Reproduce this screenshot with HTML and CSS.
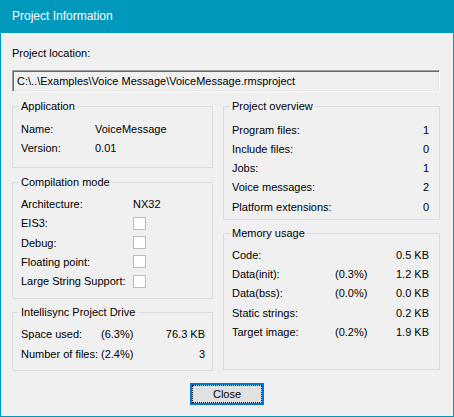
FILE: index.html
```html
<!DOCTYPE html>
<html lang="en">
<head>
    <meta charset="UTF-8">
    <title>Project Information</title>
    <link rel="stylesheet" href="styles.css">
</head>
<body>
    <div class="window">
        <div class="titlebar">Project Information</div>

        <div class="content">
            <div class="location-label">Project location:</div>
            <div class="location-box">C:\..\Examples\Voice Message\VoiceMessage.rmsproject</div>

            <div class="columns">
                <div class="column">
                    <fieldset class="group group-app">
                        <legend>Application</legend>
                        <div class="row cols-app"><span>Name:</span><span>VoiceMessage</span></div>
                        <div class="row cols-app"><span>Version:</span><span>0.01</span></div>
                    </fieldset>

                    <fieldset class="group group-comp">
                        <legend>Compilation mode</legend>
                        <div class="row cols-comp"><span>Architecture:</span><span>NX32</span></div>
                        <div class="row cols-comp"><span>EIS3:</span><span class="check"></span></div>
                        <div class="row cols-comp"><span>Debug:</span><span class="check"></span></div>
                        <div class="row cols-comp"><span>Floating point:</span><span class="check"></span></div>
                        <div class="row cols-comp"><span>Large String Support:</span><span class="check"></span></div>
                    </fieldset>

                    <fieldset class="group group-drive">
                        <legend>Intellisync Project Drive</legend>
                        <div class="row cols-drive"><span>Space used:</span><span>(6.3%)</span><span class="num">76.3 KB</span></div>
                        <div class="row cols-drive"><span>Number of files:</span><span>(2.4%)</span><span class="num">3</span></div>
                    </fieldset>
                </div>

                <div class="column">
                    <fieldset class="group group-overview">
                        <legend>Project overview</legend>
                        <div class="row cols-overview"><span>Program files:</span><span class="num">1</span></div>
                        <div class="row cols-overview"><span>Include files:</span><span class="num">0</span></div>
                        <div class="row cols-overview"><span>Jobs:</span><span class="num">1</span></div>
                        <div class="row cols-overview"><span>Voice messages:</span><span class="num">2</span></div>
                        <div class="row cols-overview"><span>Platform extensions:</span><span class="num">0</span></div>
                    </fieldset>

                    <fieldset class="group group-memory">
                        <legend>Memory usage</legend>
                        <div class="row cols-memory"><span>Code:</span><span></span><span class="num">0.5 KB</span></div>
                        <div class="row cols-memory"><span>Data(init):</span><span>(0.3%)</span><span class="num">1.2 KB</span></div>
                        <div class="row cols-memory"><span>Data(bss):</span><span>(0.0%)</span><span class="num">0.0 KB</span></div>
                        <div class="row cols-memory"><span>Static strings:</span><span></span><span class="num">0.2 KB</span></div>
                        <div class="row cols-memory"><span>Target image:</span><span>(0.2%)</span><span class="num">1.9 KB</span></div>
                    </fieldset>
                </div>
            </div>

            <div class="buttons">
                <button class="btn">Close</button>
            </div>
        </div>
    </div>
</body>
</html>
```

FILE: styles.css
```css
body {
    margin: 0;
    font-family: "Liberation Sans", Arial, sans-serif;
    font-size: 11px;
    color: #000;
    background: #f0f0f0;
}

.window {
    width: 454px;
    height: 417px;
    box-sizing: border-box;
    border: 1px solid #0099bc;
    border-top: none;
    background: #f0f0f0;
}

.titlebar {
    height: 33px;
    line-height: 32px;
    margin: 0 -1px;
    padding-left: 12px;
    background: #0099bc;
    color: #fff;
    font-size: 12px;
}

.content {
    padding: 14px 13px 0 11px;
}

.location-label {
    line-height: 13px;
}

.location-box {
    margin-top: 10px;
    height: 22px;
    box-sizing: border-box;
    border: 1px solid;
    border-color: #a0a0a0 #fff #fff #a0a0a0;
    box-shadow: inset 1px 1px 0 #696969, inset -1px -1px 0 #e3e3e3;
    padding: 0 4px;
    line-height: 20px;
    white-space: nowrap;
    overflow: hidden;
}

.columns {
    display: grid;
    grid-template-columns: 201px 217px;
    column-gap: 10px;
    margin-top: 8px;
}

.column {
    display: flex;
    flex-direction: column;
}

/* group boxes */
.group {
    margin: 0;
    border: 1px solid #dcdcdc;
    padding: 6px 7px 8px 8px;
    min-width: 0;
}

.group legend {
    margin-left: -2px;
    padding: 0 2px;
    line-height: 13px;
}

.group + .group {
    margin-top: 8px;
}

.group-app {
    padding-bottom: 9px;
}

.group-comp {
    padding-bottom: 7px;
}

.group-drive {
    margin-top: 7px !important;
    padding-bottom: 7px;
}

.group-overview {
    padding: 7px 10px 3px 8px;
}

.group-memory {
    margin-top: 7px !important;
    padding: 5px 10px 27px 8px;
}

.row {
    display: grid;
    height: 19.25px;
    align-items: center;
    white-space: nowrap;
}

.cols-app { grid-template-columns: 74px 1fr; }
.cols-comp { grid-template-columns: 112px 1fr; }
.cols-drive { grid-template-columns: 80px 1fr auto; }
.cols-overview { grid-template-columns: 1fr auto; }
.cols-memory { grid-template-columns: 103px 1fr auto; }

.num {
    text-align: right;
}

.check {
    width: 13px;
    height: 13px;
    box-sizing: border-box;
    border: 1px solid #bcbcbc;
    background: #fff;
}

/* bottom button */
.buttons {
    display: flex;
    justify-content: center;
    margin-top: 12px;
    padding-left: 2px;
}

.btn {
    width: 74px;
    height: 22px;
    box-sizing: border-box;
    border: 2px solid #0078d7;
    background: #e1e1e1;
    outline: 1px dotted #000;
    outline-offset: -3px;
    font-family: "Liberation Sans", Arial, sans-serif;
    font-size: 11px;
    color: #000;
    padding: 0;
}
```
